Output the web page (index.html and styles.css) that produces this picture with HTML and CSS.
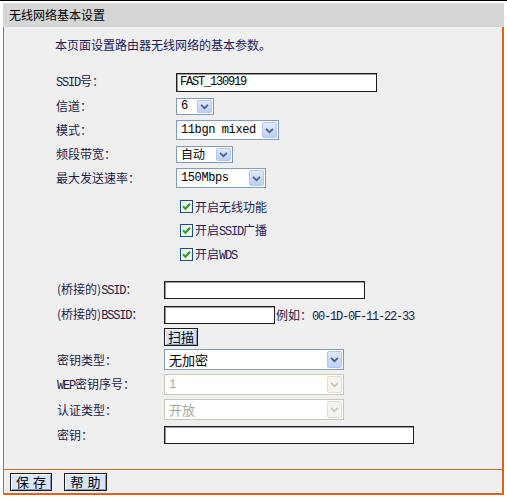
FILE: index.html
```html
<!DOCTYPE html>
<html lang="zh-CN">
<head>
<meta charset="utf-8">
<title>无线网络基本设置</title>
<link rel="stylesheet" href="styles.css">
</head>
<body>
<div class="topline"></div>
<div class="panel">
  <div class="title">无线网络基本设置</div>
  <div class="content">
    <p class="desc">本页面设置路由器无线网络的基本参数。</p>

    <div class="group g-top">
      <div class="row">
        <span class="lbl l1"><span class="m">SSID</span>号：</span>
        <input class="inp w201 h19" type="text" value="FAST_130919">
      </div>
      <div class="row">
        <span class="lbl l1">信道：</span>
        <div class="sel s-ch h17"><span class="v m2">6</span><span class="arr"><svg viewBox="0 0 15 15" width="13" height="13"><path d="M3.5 5.5 L7.5 9.5 L11.5 5.5" fill="none" stroke="#4a5f8c" stroke-width="2"/></svg></span></div>
      </div>
      <div class="row">
        <span class="lbl l1">模式：</span>
        <div class="sel s-mode h20"><span class="v m2">11bgn mixed</span><span class="arr"><svg viewBox="0 0 15 15" width="13" height="13"><path d="M3.5 5.5 L7.5 9.5 L11.5 5.5" fill="none" stroke="#4a5f8c" stroke-width="2"/></svg></span></div>
      </div>
      <div class="row">
        <span class="lbl l1">频段带宽：</span>
        <div class="sel s-bw h17"><span class="v cj">自动</span><span class="arr"><svg viewBox="0 0 15 15" width="13" height="13"><path d="M3.5 5.5 L7.5 9.5 L11.5 5.5" fill="none" stroke="#4a5f8c" stroke-width="2"/></svg></span></div>
      </div>
      <div class="row">
        <span class="lbl l1">最大发送速率：</span>
        <div class="sel s-rate h20"><span class="v m2">150Mbps</span><span class="arr"><svg viewBox="0 0 15 15" width="13" height="13"><path d="M3.5 5.5 L7.5 9.5 L11.5 5.5" fill="none" stroke="#4a5f8c" stroke-width="2"/></svg></span></div>
      </div>
    </div>

    <div class="group g-checks">
      <div class="row chk"><svg class="cb" viewBox="0 0 13 13" width="13" height="13"><rect x="0.5" y="0.5" width="12" height="12" fill="#f2f2ee" stroke="#1c5180"/><path d="M3 6.3 L5.4 8.8 L10 3.8" fill="none" stroke="#21a121" stroke-width="2"/></svg><span>开启无线功能</span></div>
      <div class="row chk"><svg class="cb" viewBox="0 0 13 13" width="13" height="13"><rect x="0.5" y="0.5" width="12" height="12" fill="#f2f2ee" stroke="#1c5180"/><path d="M3 6.3 L5.4 8.8 L10 3.8" fill="none" stroke="#21a121" stroke-width="2"/></svg><span>开启<span class="m">SSID</span>广播</span></div>
      <div class="row chk"><svg class="cb" viewBox="0 0 13 13" width="13" height="13"><rect x="0.5" y="0.5" width="12" height="12" fill="#f2f2ee" stroke="#1c5180"/><path d="M3 6.3 L5.4 8.8 L10 3.8" fill="none" stroke="#21a121" stroke-width="2"/></svg><span>开启<span class="m">WDS</span></span></div>
    </div>

    <div class="group g-bridge">
      <div class="row">
        <span class="lbl l2">(桥接的)<span class="m">SSID</span>：</span>
        <input class="inp w201 h18" type="text" value="">
      </div>
      <div class="row r25">
        <span class="lbl l2">(桥接的)<span class="m">BSSID</span>：</span>
        <input class="inp w111 h18" type="text" value="">
        <span class="eg">例如：<span class="m">00-1D-0F-11-22-33</span></span>
      </div>
      <div class="row r20">
        <span class="lbl l2"></span>
        <button class="btn b-scan" type="button">扫描</button>
      </div>
      <div class="row r25">
        <span class="lbl l2">密钥类型：</span>
        <div class="sel s-key h21"><span class="v cj">无加密</span><span class="arr"><svg viewBox="0 0 15 15" width="13" height="13"><path d="M3.5 5.5 L7.5 9.5 L11.5 5.5" fill="none" stroke="#4a5f8c" stroke-width="2"/></svg></span></div>
      </div>
      <div class="row r25">
        <span class="lbl l2"><span class="m">WEP</span>密钥序号：</span>
        <div class="sel s-key h21 dis"><span class="v m2">1</span><span class="arr"><svg viewBox="0 0 15 15" width="13" height="13"><path d="M3.5 5.5 L7.5 9.5 L11.5 5.5" fill="none" stroke="#c9c7ba" stroke-width="2"/></svg></span></div>
      </div>
      <div class="row r25">
        <span class="lbl l2">认证类型：</span>
        <div class="sel s-key h21 dis"><span class="v cj">开放</span><span class="arr"><svg viewBox="0 0 15 15" width="13" height="13"><path d="M3.5 5.5 L7.5 9.5 L11.5 5.5" fill="none" stroke="#c9c7ba" stroke-width="2"/></svg></span></div>
      </div>
      <div class="row r25">
        <span class="lbl l2">密钥：</span>
        <input class="inp w250 h18" type="text" value="">
      </div>
    </div>
  </div>
  <div class="footer">
    <button class="btn b-foot" type="button">保存</button>
    <button class="btn b-foot b-help" type="button">帮助</button>
  </div>
</div>
</body>
</html>
```

FILE: styles.css
```css
* { box-sizing: border-box; }

body {
  margin: 0;
  background: #ffffff;
  font-family: "Noto Sans CJK SC", "Liberation Sans", sans-serif;
  font-size: 12px;
  color: #1c1c4c;
}

.topline { height: 1px; background: #000; }

.panel {
  width: 501px;
  margin: 2px 0 0 3px;
}

.title {
  height: 24px;
  line-height: 24px;
  background: #d6d6d6;
  padding-left: 6px;
  color: #000;
  font-size: 12px;
}

.content {
  height: 442px;
  background: #efefef;
  border-left: 1px solid #d9661e;
  border-right: 2px solid #d9661e;
  padding: 9px 0 0 52px;
}

.desc {
  margin: 0 0 0 -1px;
  height: 18px;
  line-height: 18px;
  color: #1a1a5e;
}

.m {
  font-family: "Liberation Mono", monospace;
  font-size: 12px;
  letter-spacing: -1.2px;
}

.group { display: flex; flex-direction: column; }
.g-top { margin-top: 16px; }
.g-checks { margin-top: 4px; padding-left: 124px; }
.g-bridge { margin-top: 12px; }

.row {
  display: flex;
  align-items: center;
  height: 24px;
  white-space: nowrap;
}
.r25 { height: 25px; }
.r20 { height: 20px; }

.lbl { flex: none; line-height: 14px; }
.l1 { width: 120px; }
.l2 { width: 108px; }
.g-bridge .lbl { padding-left: 1px; }

.inp {
  border: 1px solid #1e1e1e;
  box-shadow: inset 1px 1px 0 #9a9a9a;
  background: #fff;
  padding: 0 3px;
  margin: 0;
  font-family: "Liberation Mono", monospace;
  font-size: 12px;
  letter-spacing: -1.2px;
  color: #000;
  outline: none;
}
.w201 { width: 201px; }
.w111 { width: 111px; }
.w250 { width: 250px; }
.h19 { height: 19px; }
.h18 { height: 18px; }

.sel {
  display: flex;
  align-items: stretch;
  border: 1px solid #7f9db9;
  background: #fff;
  padding: 1px;
}
.h17 { height: 17px; }
.h20 { height: 20px; }
.h21 { height: 21px; }
.s-ch { width: 38px; }
.s-mode { width: 103px; }
.s-bw { width: 57px; }
.s-rate { width: 90px; }
.s-key { width: 180px; }

.sel .v {
  flex: 1;
  display: flex;
  align-items: center;
  padding-left: 3px;
  line-height: 1;
  color: #000;
  white-space: nowrap;
}
.sel .m2 {
  font-family: "Liberation Mono", monospace;
  font-size: 12px;
  letter-spacing: -0.4px;
}
.sel .cj {
  font-family: "Noto Sans CJK SC", sans-serif;
  font-size: 13px;
}
.s-bw .cj { font-size: 12px; }
.sel .arr {
  flex: none;
  width: 15px;
  display: flex;
  align-items: center;
  justify-content: center;
  background: linear-gradient(#e0e9fd, #bccff6);
  border: 1px solid #b3c6ef;
  border-radius: 2px;
}
.sel.dis { border-color: #c9c7ba; }
.sel.dis .v { color: #a8a8a0; }
.sel.dis .arr {
  background: #f4f3ee;
  border-color: #e0ded4;
}

.chk { gap: 2px; color: #23235e; }
.cb { flex: none; }

.eg { margin-left: 1px; color: #1c1c4c; }

.btn {
  height: 18px;
  margin: 0;
  padding: 0;
  border: 1px solid #1a1a1a;
  background: #d6e4fc;
  box-shadow: inset 1px 1px 0 #ffffff, inset -1px -1px 0 #8c99b0;
  font-family: "Noto Sans CJK SC", sans-serif;
  font-size: 12px;
  line-height: 14px;
  color: #000;
  white-space: nowrap;
}
.b-scan { width: 34px; font-size: 13px; }
.b-foot {
  flex: none;
  width: 42px;
  font-size: 13px;
  letter-spacing: 4px;
  text-indent: 4px;
}
.b-help { width: 43px; }

.footer {
  height: 26px;
  display: flex;
  gap: 12px;
  padding: 3px 0 0 6px;
  background: #efefef;
  border: 1px solid #d9661e;
  border-width: 1px 2px 2px 1px;
}
```
